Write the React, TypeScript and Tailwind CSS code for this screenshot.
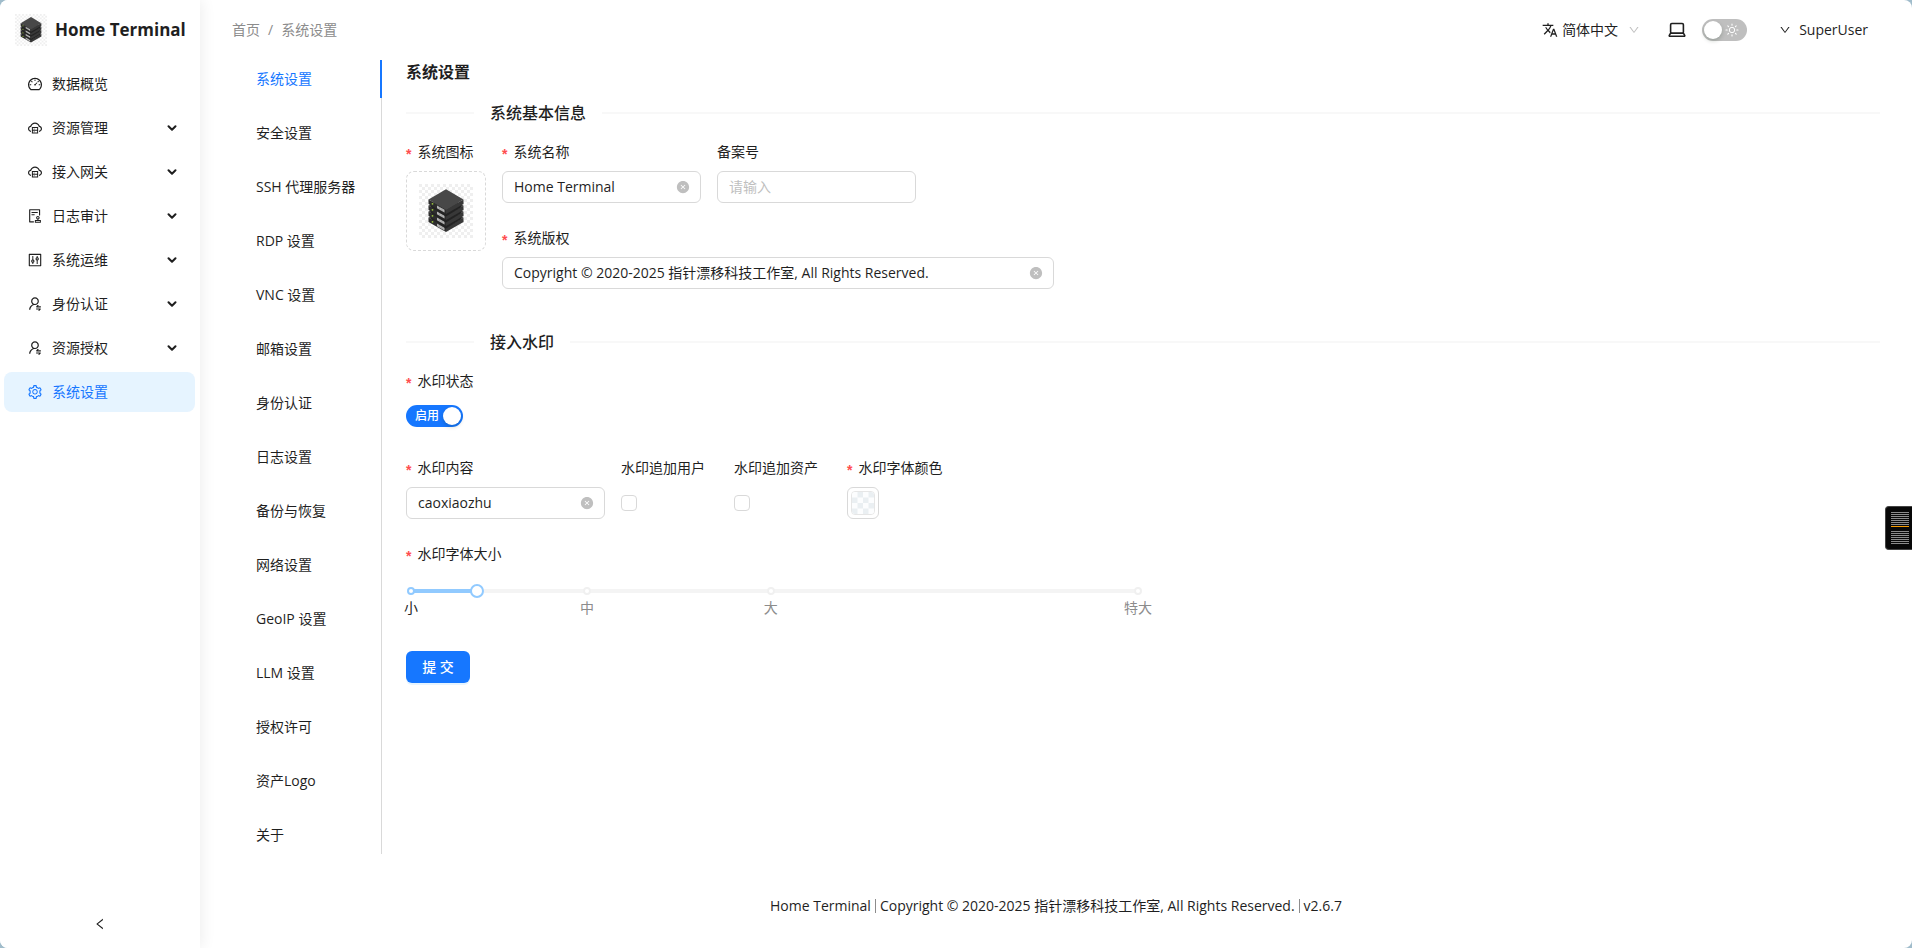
import { useId, useState } from "react";
import type { ReactNode } from "react";
import {
  AiFillCloseCircle,
  AiOutlineAudit,
  AiOutlineCloudServer,
  AiOutlineControl,
  AiOutlineDashboard,
  AiOutlineDown,
  AiOutlineLeft,
  AiOutlineSetting,
  AiOutlineUserSwitch,
} from "react-icons/ai";
import type { IconType } from "react-icons";
import { MdTranslate } from "react-icons/md";
import { ChevronDown } from "lucide-react";

const COPYRIGHT = "Copyright © 2020-2025 指针漂移科技工作室, All Rights Reserved.";

const menu: { label: string; icon: IconType; expandable?: boolean; active?: boolean }[] = [
  { label: "数据概览", icon: AiOutlineDashboard },
  { label: "资源管理", icon: AiOutlineCloudServer, expandable: true },
  { label: "接入网关", icon: AiOutlineCloudServer, expandable: true },
  { label: "日志审计", icon: AiOutlineAudit, expandable: true },
  { label: "系统运维", icon: AiOutlineControl, expandable: true },
  { label: "身份认证", icon: AiOutlineUserSwitch, expandable: true },
  { label: "资源授权", icon: AiOutlineUserSwitch, expandable: true },
  { label: "系统设置", icon: AiOutlineSetting, active: true },
];

const tabs = [
  "系统设置",
  "安全设置",
  "SSH 代理服务器",
  "RDP 设置",
  "VNC 设置",
  "邮箱设置",
  "身份认证",
  "日志设置",
  "备份与恢复",
  "网络设置",
  "GeoIP 设置",
  "LLM 设置",
  "授权许可",
  "资产Logo",
  "关于",
];

const marks = [
  { label: "小", at: 0 },
  { label: "中", at: 24.2 },
  { label: "大", at: 49.5 },
  { label: "特大", at: 100 },
];

function ServerLogo({ className }: { className: string }) {
  const pattern = useId();
  return (
    <svg viewBox="0 0 54 54" className={className} aria-hidden="true">
      <defs>
        <pattern id={pattern} width="6" height="6" patternUnits="userSpaceOnUse">
          <rect width="6" height="6" fill="#fff" />
          <rect width="3" height="3" fill="#efefef" />
          <rect x="3" y="3" width="3" height="3" fill="#efefef" />
        </pattern>
      </defs>
      <rect width="54" height="54" fill={`url(#${pattern})`} />
      {[3, 2, 1, 0].map((i) => (
        <g key={i} transform={`translate(0 ${i * 6})`}>
          {i < 3 && <path d="M11.5 17 27 26.5 42.5 17V23L27 32.5 11.5 23Z" fill="#232323" />}
          <path d="M9.5 15.5 27 25.5V30L9.5 20Z" fill="#2d2d2d" />
          <path d="M44.5 15.5 27 25.5V30L44.5 20Z" fill="#383838" />
          <path d="M27 5.2 44.5 15.5 27 25.8 9.5 15.5Z" fill="#484848" />
          <path d="M18 21.4 25.5 25.7V28.5L18 24.200Z" fill="#b4b4b4" />
          <path d="M20.500 23v2.500M23 24.400v2.500" stroke="#8a8a8a" strokeWidth=".5" />
          <circle cx="13.5" cy="19.8" r=".9" fill="#9bc53d" />
        </g>
      ))}
    </svg>
  );
}

function LaptopIcon() {
  return (
    <svg viewBox="0 0 18 16" className="h-4 w-[18px]" fill="none" stroke="#1f1f1f" strokeWidth="1.6" strokeLinejoin="round" aria-hidden="true">
      <rect x="2.6" y="1.5" width="12.8" height="9.7" rx="1.2" />
      <path d="M2.6 11.2h12.8l1.3 2.2a.6.6 0 0 1-.6.9H1.9a.6.6 0 0 1-.6-.9Z" />
    </svg>
  );
}

function SunIcon() {
  return (
    <svg viewBox="0 0 14 14" className="size-3.5" fill="none" stroke="#fff" aria-hidden="true">
      <circle cx="7" cy="7" r="2.7" strokeWidth="1" />
      <path
        d="M7 1v1.2M7 11.8V13M1 7h1.2M11.8 7H13M2.8 2.8l.8.8M10.4 10.4l.8.8M2.8 11.2l.8-.8M10.4 3.6l.8-.8"
        strokeWidth="1.1"
        strokeLinecap="round"
      />
    </svg>
  );
}

function Label({ htmlFor, required, children }: { htmlFor: string; required?: boolean; children: ReactNode }) {
  return (
    <label htmlFor={htmlFor} className="flex h-[22px] items-center gap-1.5 whitespace-nowrap">
      {required && <span className="pt-1 font-['Liberation_Sans'] font-bold text-[#ff4d4f]">*</span>}
      {children}
    </label>
  );
}

function TextField(props: {
  id: string;
  label: string;
  required?: boolean;
  value?: string;
  placeholder?: string;
  width: string;
}) {
  const [value, setValue] = useState(props.value ?? "");
  return (
    <div className={`flex flex-col gap-2 ${props.width}`}>
      <Label htmlFor={props.id} required={props.required}>
        {props.label}
      </Label>
      <div className="flex h-8 items-center gap-1 rounded-md border border-[#d9d9d9] bg-white pl-[11px] pr-2.5">
        <input
          id={props.id}
          value={value}
          placeholder={props.placeholder}
          onChange={(e) => setValue(e.target.value)}
          className="min-w-0 flex-1 bg-transparent outline-none placeholder:text-[#bfbfbf]"
        />
        {value && (
          <button type="button" aria-label="清除" onClick={() => setValue("")}>
            <AiFillCloseCircle className="size-3.5 text-[#bfbfbf]" />
          </button>
        )}
      </div>
    </div>
  );
}

function SectionTitle({ children }: { children: ReactNode }) {
  return (
    <div className="my-4 flex h-[25px] items-center gap-4">
      <span className="h-0.5 w-[68px] bg-[#f8f8f8]" />
      <h3 className="text-base font-medium">{children}</h3>
      <span className="h-0.5 flex-1 bg-[#f8f8f8]" />
    </div>
  );
}

function CheckField({ id, label }: { id: string; label: string }) {
  return (
    <div className="flex flex-col gap-2">
      <Label htmlFor={id}>{label}</Label>
      <div className="flex h-8 items-center">
        <input
          id={id}
          type="checkbox"
          className="size-4 appearance-none rounded border border-[#d9d9d9] bg-white checked:border-[#1677ff] checked:bg-[#1677ff]"
        />
      </div>
    </div>
  );
}

function SizeSlider() {
  const [value, setValue] = useState(3);
  const percent = (value / 33) * 100;
  return (
    <div className="relative -ml-0.5 h-[45px] w-full max-w-[741px] pt-[11px]">
      <div className="relative h-3.5">
        <div className="absolute inset-x-[7px] top-[5px] h-1 rounded-sm bg-[#f4f4f4]">
          <div className="h-full rounded-sm bg-[#91caff]" style={{ width: `${percent}%` }} />
          {marks.map((m) => (
            <div
              key={m.label}
              className="absolute -top-0.5 flex w-0 flex-col items-center gap-0.5"
              style={{ left: `${m.at}%` }}
            >
              <span
                className={`size-2 shrink-0 rounded-full border-2 bg-white ${m.at <= percent ? "border-[#91caff]" : "border-[#f0f0f0]"}`}
              />
              <span className={`whitespace-nowrap ${m.at <= percent ? "text-[#1f1f1f]" : "text-[#8c8c8c]"}`}>
                {m.label}
              </span>
            </div>
          ))}
        </div>
        <input
          id="font-size"
          type="range"
          min={0}
          max={33}
          value={value}
          onChange={(e) => setValue(Number(e.target.value))}
          className="relative block h-3.5 w-full appearance-none bg-transparent outline-none [&::-webkit-slider-thumb]:size-3.5 [&::-webkit-slider-thumb]:appearance-none [&::-webkit-slider-thumb]:rounded-full [&::-webkit-slider-thumb]:border-2 [&::-webkit-slider-thumb]:border-[#91caff] [&::-webkit-slider-thumb]:bg-white"
        />
      </div>
    </div>
  );
}

function Sidebar() {
  return (
    <aside className="relative flex w-[200px] shrink-0 flex-col bg-white shadow-[2px_0_14px_rgba(0,0,0,0.07)]">
      <div className="flex h-[60px] items-center gap-2 pl-[15px]">
        <ServerLogo className="size-8" />
        <h1 className="whitespace-nowrap text-[17px] font-bold">Home Terminal</h1>
      </div>
      <nav className="flex flex-col gap-1 pl-1 pr-[5px] pt-1">
        {menu.map(({ label, icon: Icon, expandable, active }) => (
          <a
            key={label}
            href="#"
            className={`flex h-10 items-center gap-[9px] rounded-lg pl-[23px] pr-4 ${active ? "bg-[#e6f4ff] text-[#1677ff]" : ""}`}
          >
            <Icon className="size-4" />
            <span className="flex-1">{label}</span>
            {expandable && <ChevronDown className="size-3.5" strokeWidth={3.5} />}
          </a>
        ))}
      </nav>
      <button type="button" aria-label="收起菜单" className="mt-auto flex h-12 items-center justify-center">
        <AiOutlineLeft className="size-3.5" />
      </button>
    </aside>
  );
}

function Header() {
  return (
    <header className="flex h-[60px] items-center justify-between pl-8 pr-11">
      <nav className="flex gap-2 text-[#8c8c8c]" aria-label="面包屑">
        <a href="#">首页</a>
        <span>/</span>
        <span>系统设置</span>
      </nav>
      <div className="flex items-center">
        <div className="flex items-center gap-1">
          <MdTranslate className="size-4" />
          <select aria-label="语言" defaultValue="zh" className="appearance-none bg-transparent outline-none">
            <option value="zh">简体中文</option>
          </select>
          <AiOutlineDown className="ml-1.5 size-3 text-[#bfbfbf]" />
        </div>
        <button type="button" aria-label="打开终端" className="ml-7">
          <LaptopIcon />
        </button>
        <button
          type="button"
          role="switch"
          aria-checked="false"
          aria-label="深色模式"
          className="ml-4 flex h-[22px] w-[45px] items-center justify-between rounded-full bg-[#bfbfbf] pl-0.5 pr-2"
        >
          <span className="size-[18px] rounded-full bg-white shadow-[0_2px_4px_rgba(0,35,11,0.2)]" />
          <SunIcon />
        </button>
        <button type="button" className="ml-8 flex items-center gap-2">
          <AiOutlineDown className="size-3" />
          SuperUser
        </button>
      </div>
    </header>
  );
}

function SettingsForm() {
  const [enabled, setEnabled] = useState(true);
  return (
    <form className="min-w-0 flex-1 pl-6" onSubmit={(e) => e.preventDefault()}>
      <h2 className="text-base font-semibold">系统设置</h2>
      <SectionTitle>系统基本信息</SectionTitle>
      <div className="flex gap-4">
        <div className="flex w-20 flex-col gap-2">
          <Label htmlFor="logo" required>
            系统图标
          </Label>
          <label
            htmlFor="logo"
            className="flex size-20 cursor-pointer items-center justify-center rounded-lg border border-dashed border-[#d9d9d9]"
          >
            <ServerLogo className="size-[54px]" />
            <input id="logo" type="file" aria-label="系统图标" className="sr-only" />
          </label>
        </div>
        <div className="flex flex-col gap-6">
          <div className="flex gap-4">
            <TextField id="name" label="系统名称" required value="Home Terminal" width="w-[199px]" />
            <TextField id="icp" label="备案号" placeholder="请输入" width="w-[199px]" />
          </div>
          <TextField id="copyright" label="系统版权" required value={COPYRIGHT} width="w-[552px]" />
        </div>
      </div>

      <div className="pt-6">
        <SectionTitle>接入水印</SectionTitle>
      </div>
      <div className="flex flex-col gap-6">
        <div className="flex flex-col gap-2">
          <Label htmlFor="watermark" required>
            水印状态
          </Label>
          <div className="flex h-[33px] items-start pt-[5px]">
            <button
              id="watermark"
              type="button"
              role="switch"
              aria-checked={enabled}
              onClick={() => setEnabled(!enabled)}
              className={`flex h-[22px] w-[57px] items-center justify-between rounded-full pl-[9px] pr-0.5 text-xs font-medium text-white ${enabled ? "bg-[#1677ff]" : "bg-[#bfbfbf]"}`}
            >
              启用
              <span className="size-[18px] rounded-full bg-white shadow-[0_2px_4px_rgba(0,35,11,0.2)]" />
            </button>
          </div>
        </div>

        <div className="flex gap-4">
          <TextField id="content" label="水印内容" required value="caoxiaozhu" width="w-[199px]" />
          <div className="flex gap-[29px]">
            <CheckField id="append-user" label="水印追加用户" />
            <CheckField id="append-asset" label="水印追加资产" />
            <div className="flex flex-col gap-2">
              <Label htmlFor="color" required>
                水印字体颜色
              </Label>
              <button
                id="color"
                type="button"
                className="flex size-8 items-center justify-center rounded-md border border-[#d9d9d9]"
              >
                <svg viewBox="0 0 24 24" className="size-6 rounded border border-[#e6e6e6]" aria-hidden="true">
                  <rect width="24" height="24" fill="#fcfdfe" />
                  {[0, 1, 2, 3].map((r) =>
                    [0, 1].map((c) => (
                      <rect key={`${r}-${c}`} x={c * 12 + ((r + 1) % 2) * 6} y={r * 6} width="6" height="6" fill="#eaeff2" />
                    )),
                  )}
                </svg>
              </button>
            </div>
          </div>
        </div>

        <div className="flex flex-col gap-2">
          <Label htmlFor="font-size" required>
            水印字体大小
          </Label>
          <SizeSlider />
        </div>
      </div>
      <button
        type="submit"
        className="mt-[33px] flex h-8 w-16 items-center justify-center rounded-md bg-[#1677ff] font-medium text-white shadow-[0_2px_0_rgba(5,145,255,0.1)]"
      >
        提 交
      </button>
    </form>
  );
}

function SideHandle() {
  return (
    <div className="fixed right-0 top-[506px] flex h-11 w-[27px] flex-col justify-center gap-1 rounded-l-sm border border-r-0 border-[#444] bg-[#080808] pl-[5px] pr-[3px]">
      <div className="flex flex-col gap-px">
        {[0, 1, 2, 3, 4, 5, 6].map((i) => (
          <span key={i} className="h-px bg-[#8b8b8b]" />
        ))}
        <span className="h-px bg-[#f59a00]" />
      </div>
      <div className="flex flex-col gap-px">
        {[0, 1, 2, 3, 4, 5, 6].map((i) => (
          <span key={i} className="h-px bg-[#8b8b8b]" />
        ))}
      </div>
    </div>
  );
}

export default function App() {
  return (
    <div className="min-h-screen bg-[#a0bccb] font-['Open_Sans','Noto_Sans_CJK_SC',sans-serif] text-sm leading-[22px] text-[#1f1f1f]">
      <div className="flex min-h-screen overflow-hidden rounded-lg bg-white">
        <Sidebar />
        <div className="flex min-w-0 flex-1 flex-col">
          <Header />
          <main className="flex pl-8 pr-8">
            <div role="tablist" aria-orientation="vertical" className="flex w-[150px] shrink-0 flex-col gap-4 border-r border-[#d9d9d9]">
              {tabs.map((tab, i) => (
                <button
                  key={tab}
                  type="button"
                  role="tab"
                  aria-selected={i === 0}
                  className={`-mr-px flex h-[38px] items-center whitespace-nowrap border-r-2 pl-6 ${i === 0 ? "border-[#1677ff] text-[#1677ff]" : "border-transparent"}`}
                >
                  {tab}
                </button>
              ))}
            </div>
            <SettingsForm />
          </main>
          <footer className="mt-auto flex items-center justify-center gap-1 pb-[31px] pt-10">
            <span>Home Terminal</span>
            <span className="h-3.5 w-px bg-[#8c8c8c]" />
            <span>{COPYRIGHT}</span>
            <span className="h-3.5 w-px bg-[#8c8c8c]" />
            <span>v2.6.7</span>
          </footer>
        </div>
      </div>
      <SideHandle />
    </div>
  );
}
